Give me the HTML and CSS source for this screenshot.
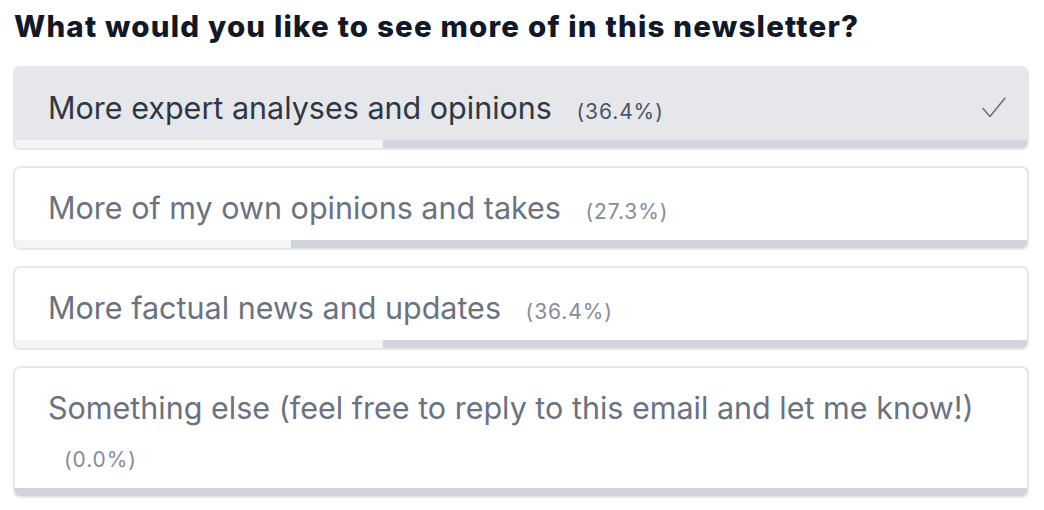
FILE: index.html
```html
<!DOCTYPE html>
<html lang="en">
<head>
<meta charset="utf-8">
<title>Poll</title>
<link rel="stylesheet" href="styles.css">
</head>
<body>
<div class="poll">
  <h2 class="poll-title">What would you like to see more of in this newsletter?</h2>
  <ul class="options">
    <li class="option selected">
      <div class="option-body">
        <span class="option-text">More expert analyses and opinions <span class="pct">(36.4%)</span></span>
        <svg class="check" width="24" height="22" viewBox="0 0 24 22" aria-hidden="true"><path d="M1 11.5 L8 19.5 L23 1" fill="none" stroke="#6b7280" stroke-width="1.6" stroke-linecap="round" stroke-linejoin="round"/></svg>
      </div>
      <div class="bar"><div class="bar-fill" style="width:36.4%"></div></div>
    </li>
    <li class="option">
      <div class="option-body">
        <span class="option-text">More of my own opinions and takes <span class="pct">(27.3%)</span></span>
      </div>
      <div class="bar"><div class="bar-fill" style="width:27.3%"></div></div>
    </li>
    <li class="option">
      <div class="option-body">
        <span class="option-text">More factual news and updates <span class="pct">(36.4%)</span></span>
      </div>
      <div class="bar"><div class="bar-fill" style="width:36.4%"></div></div>
    </li>
    <li class="option">
      <div class="option-body">
        <span class="option-text">Something else (feel free to reply to this email and let me know!) <span class="pct">(0.0%)</span></span>
      </div>
      <div class="bar"><div class="bar-fill" style="width:0%"></div></div>
    </li>
  </ul>
</div>
</body>
</html>
```
FILE: styles.css
```css
html, body {
  margin: 0;
  padding: 0;
  background: #ffffff;
}

body {
  font-family: Inter, "Noto Sans", "Liberation Sans", sans-serif;
}

.poll {
  padding: 0 15px 0 13px;
  width: 1016px;
}

.poll-title {
  margin: 0;
  padding: 8px 0 0 1px;
  font-size: 29.5px;
  line-height: 36px;
  font-weight: 800;
  color: #111827;
  letter-spacing: 1.2px;
  white-space: nowrap;
}

.options {
  list-style: none;
  margin: 22px 0 0 0;
  padding: 0;
  display: flex;
  flex-direction: column;
  gap: 16px;
}

.option {
  border: 2px solid #e5e7eb;
  border-radius: 7px;
  background: #ffffff;
  overflow: hidden;
  display: flex;
  flex-direction: column;
}

.option.selected {
  background: #e5e7eb;
}

.option-body {
  display: flex;
  align-items: flex-start;
  padding: 16px 21px 8px 33px;
  line-height: 48px;
}

.option-text {
  flex: 1;
  font-size: 30.5px;
  color: #6b7280;
}

.option.selected .option-text {
  color: #2f3744;
}

.pct {
  display: inline-block;
  margin-left: 16px;
  font-size: 21px;
  line-height: 24px;
  letter-spacing: 0.9px;
  color: #868c98;
}

.option.selected .pct {
  color: #4b5563;
}

.check {
  margin-top: 13px;
  flex: none;
}

.bar {
  height: 8px;
  background: #d1d5db;
  display: flex;
}

.bar-fill {
  height: 100%;
  background: #f5f5f5;
}
```
